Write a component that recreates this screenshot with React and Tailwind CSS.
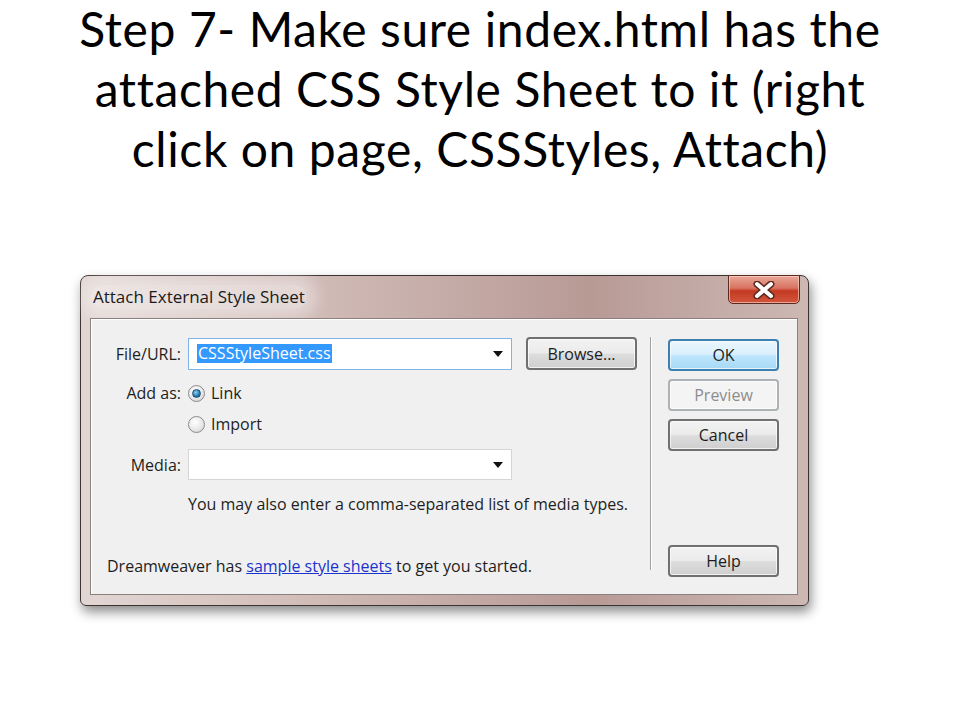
import React from "react";

function Btn({ children, className = "", variant = "normal" }) {
  const styles = {
    normal:
      "border-[#707070] bg-[linear-gradient(#f2f2f2_0%,#ebebeb_48%,#dddddd_52%,#cfcfcf_100%)] text-[#1c1c1c]",
    ok: "border-[#3c7fb1] bg-[linear-gradient(#eaf6fd_0%,#d9f0fc_48%,#bee6fd_52%,#a7d9f5_100%)] text-[#1c1c1c]",
    disabled: "border-[#adb2b5] bg-[#f4f4f4] text-[#8d8d8d]",
  };
  return (
    <div
      className={`flex h-[32px] w-[111px] items-center justify-center rounded-[4px] border-2 shadow-[inset_0_0_0_1px_rgba(255,255,255,0.7)] ${styles[variant]} ${className}`}
    >
      {children}
    </div>
  );
}

function Radio({ checked }) {
  return (
    <div className="flex h-[17px] w-[17px] items-center justify-center rounded-full border border-[#8a8a8a] bg-[radial-gradient(circle_at_40%_35%,#ffffff_0%,#e6e6e6_60%,#c8c8c8_100%)]">
      {checked && (
        <div className="h-[9px] w-[9px] rounded-full border border-[#1c4f73] bg-[radial-gradient(circle_at_40%_35%,#8fd3f5_0%,#2b7fb8_55%,#0d3f66_100%)]" />
      )}
    </div>
  );
}

function Arrow() {
  return (
    <svg width="10" height="6" viewBox="0 0 10 6">
      <path d="M0 0 L10 0 L5 6 Z" fill="#111" />
    </svg>
  );
}

export default function App() {
  return (
    <div className="min-h-[720px] w-[960px] overflow-hidden bg-white">
      <h1 className="flex flex-col items-center gap-[2px] text-center font-['Lato',sans-serif] text-[48px] leading-[58px] font-normal tracking-[0.6px] text-black [font-variant-ligatures:none]">
        <span>Step 7- Make sure index.html has the</span>
        <span>attached CSS Style Sheet to it (right</span>
        <span>click on page, CSSStyles, Attach)</span>
      </h1>

      <div className="ml-[80px] mt-[97px] flex h-[331px] w-[729px] flex-col rounded-t-[8px] rounded-b-[6px] border border-[#3d3333] bg-[linear-gradient(90deg,#e2d6d3_0%,#d2bdb9_30%,#b89a95_70%,#cdb8b4_100%)] shadow-[2px_6px_12px_rgba(0,0,0,0.45)] font-['Open_Sans',sans-serif]">
        {/* title bar */}
        <div className="flex h-[42px] items-start justify-between">
          <div className="ml-[10px] mt-[9px] rounded-[12px] bg-[rgba(255,255,255,0.4)] px-[2px] text-[17px] leading-[24px] text-[#1a1a1a] shadow-[0_0_14px_10px_rgba(255,255,255,0.35)]">
            Attach External Style Sheet
          </div>
          <div className="-mt-[1px] mr-[8px] flex h-[29px] w-[72px] items-center justify-center rounded-b-[5px] border border-[#5a2a22] bg-[linear-gradient(#e9a899_0%,#d8725f_45%,#c33a22_55%,#d2563c_100%)] shadow-[inset_0_0_0_1px_rgba(255,220,210,0.6)]">
            <svg width="24" height="18" viewBox="0 0 24 18">
              <path d="M5 3 L19 15 M19 3 L5 15" stroke="#5a2a22" strokeWidth="7" strokeLinecap="round" />
              <path d="M5 3 L19 15 M19 3 L5 15" stroke="#ffffff" strokeWidth="4" strokeLinecap="round" />
            </svg>
          </div>
        </div>

        {/* client area */}
        <div className="ml-[9px] flex h-[277px] w-[708px] border border-[#8c807e] bg-[#f0f0f0] text-[16px] text-[#1e1e1e] shadow-[inset_1px_1px_0_#ffffff]">
          {/* left part */}
          <div className="flex w-[559px] flex-col pt-[18px]">
            <div className="flex items-center">
              <div className="w-[97px] pr-[7px] text-right leading-[20px]">File/URL:</div>
              <div className="flex h-[32px] w-[324px] items-center justify-between border border-[#7eb4ea] bg-white pl-[8px] pr-[8px]">
                <span className="bg-[#3399ff] px-[1px] leading-[19px] text-white">CSSStyleSheet.css</span>
                <Arrow />
              </div>
              <Btn className="ml-[14px] h-[33px]">Browse...</Btn>
            </div>
            <div className="mt-[13px] flex h-[20px] items-center">
              <div className="w-[97px] pr-[7px] text-right">Add as:</div>
              <Radio checked />
              <span className="ml-[6px]">Link</span>
            </div>
            <div className="mt-[11px] flex h-[20px] items-center">
              <div className="w-[97px]" />
              <Radio />
              <span className="ml-[6px]">Import</span>
            </div>
            <div className="mt-[15px] flex items-center">
              <div className="w-[97px] pr-[7px] text-right">Media:</div>
              <div className="flex h-[31px] w-[324px] items-center justify-end border border-[#d5d5d5] bg-white pr-[8px]">
                <Arrow />
              </div>
            </div>
            <div className="ml-[97px] mt-[15px] h-[18px] leading-[18px]">
              You may also enter a comma-separated list of media types.
            </div>
            <div className="ml-[16px] mt-[44px] h-[18px] leading-[18px]">
              Dreamweaver has{" "}
              <span className="text-[#1a33cc] underline">sample style sheets</span> to get you started.
            </div>
          </div>

          {/* separator */}
          <div className="mt-[18px] h-[233px] w-[2px] border-l border-[#a0a0a0] bg-white" />

          {/* right column */}
          <div className="ml-[16px] flex flex-col pt-[20px]">
            <Btn variant="ok">OK</Btn>
            <Btn variant="disabled" className="mt-[8px]">Preview</Btn>
            <Btn className="mt-[8px]">Cancel</Btn>
            <Btn className="mt-[94px]">Help</Btn>
          </div>
        </div>
      </div>
    </div>
  );
}
